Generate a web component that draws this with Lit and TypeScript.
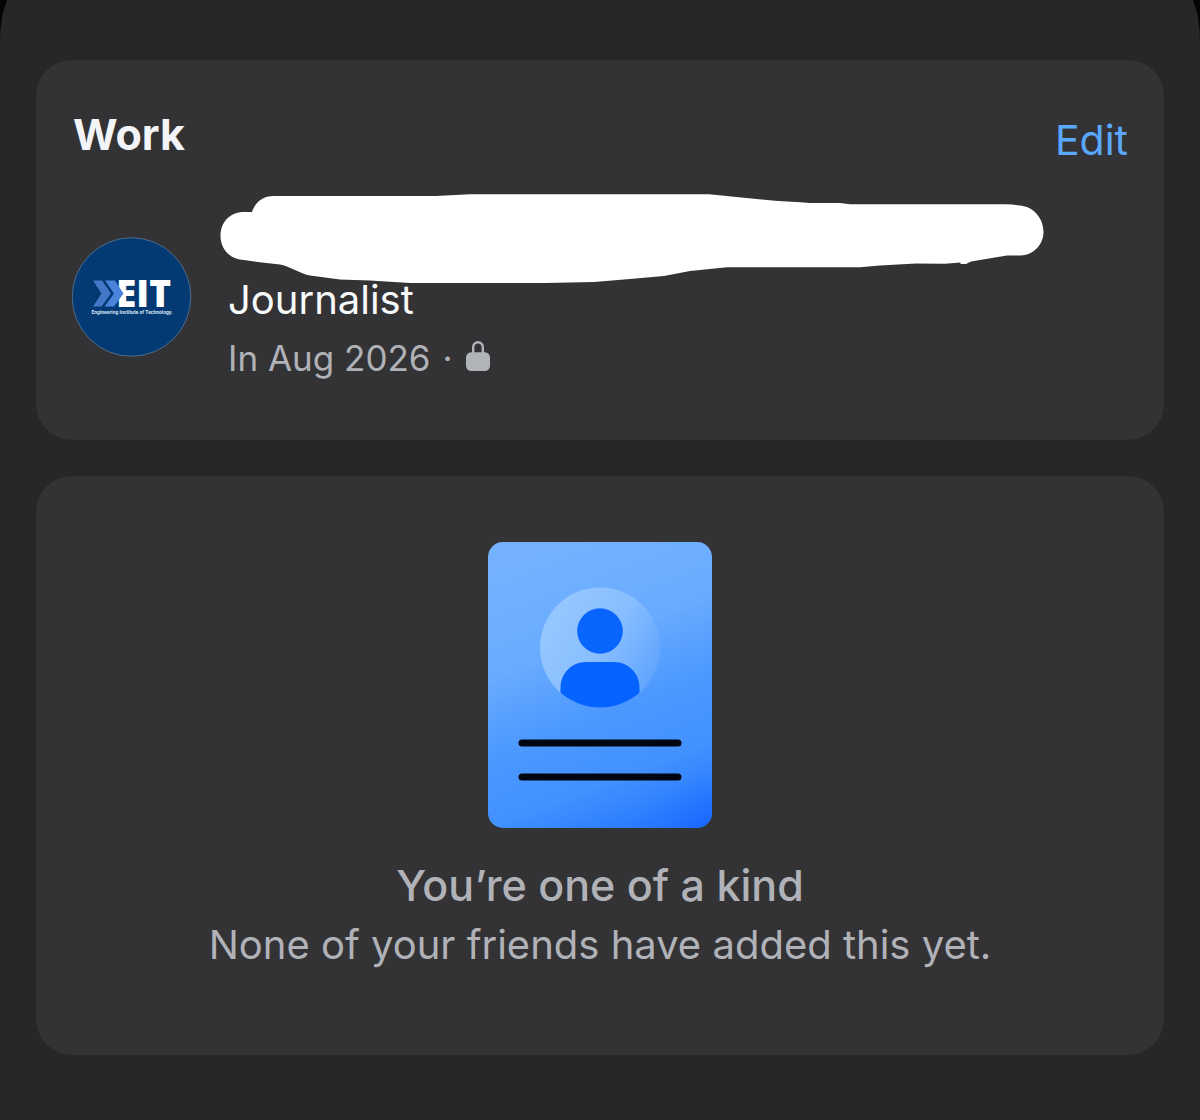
import { LitElement, html, css } from "lit";
import { customElement } from "lit/decorators.js";

@customElement("employer-logo")
class EmployerLogo extends LitElement {
  static styles = css`
    :host {
      display: block;
      flex: none;
    }
    .logo {
      display: block;
      width: 120px;
      height: 120px;
    }
    .name {
      font: 800 37px "Open Sans", sans-serif;
      fill: #ffffff;
    }
    .tagline {
      font: 700 5px "Roboto", sans-serif;
      fill: #d5e2f2;
    }
  `;

  render() {
    return html`
      <svg class="logo" viewBox="0 0 120 120" role="img" aria-label="EIT">
        <circle cx="59.500" cy="60" r="59.300" fill="#033a73" stroke="#5f7890" stroke-width="0.800" />
        <text class="name" x="44" y="69.500">EIT</text>
        <path d="M21 43.500H30L39 56.500L29.500 69.500H21L29.500 56.500Z" fill="#4378c8" />
        <path d="M33 43.500H43L51.500 56.500L42 69.500H32.500L42 56.500Z" fill="#4a83dc" />
        <text class="tagline" x="19.500" y="77">Engineering Institute of Technology.</text>
      </svg>
    `;
  }
}

@customElement("work-card")
class WorkCard extends LitElement {
  static styles = css`
    :host {
      display: block;
    }
    .card {
      display: flex;
      flex-direction: column;
      gap: 35px;
      padding: 48px 36px 53px;
      border-radius: 36px;
      background: #333335;
    }
    .header {
      display: flex;
      justify-content: space-between;
      align-items: flex-start;
      padding-left: 1px;
    }
    .title {
      margin: 0;
      font-size: 43px;
      font-weight: 700;
      line-height: 53px;
      color: #f2f4f7;
    }
    .edit {
      font-size: 41px;
      line-height: 64px;
      color: #5aa7ff;
      text-decoration: none;
    }
    .entry {
      display: flex;
      align-items: center;
      gap: 36px;
    }
    .details {
      flex: 1;
      min-width: 0;
    }
    .scribble {
      display: block;
      width: 824px;
      height: 90px;
      margin: -13px 0 -13px -8px;
    }
    .role,
    .date {
      margin: 0;
      line-height: 58px;
    }
    .role {
      font-size: 40px;
      color: #f8f9fb;
    }
    .date {
      display: flex;
      align-items: center;
      gap: 12px;
      font-size: 35px;
      color: #b0b2b8;
    }
    .lock {
      width: 26px;
      height: 36px;
    }
  `;

  render() {
    return html`
      <section class="card">
        <header class="header">
          <h2 class="title">Work</h2>
          <a class="edit" href="#edit">Edit</a>
        </header>
        <div class="entry">
          <employer-logo></employer-logo>
          <div class="details">
            <svg class="scribble" viewBox="220 194 824 90" aria-hidden="true">
              <path
                fill="#ffffff"
                d="M252 212C255 203 262 196 274 196L436 196L470 194.300H709L775 200.800Q790 201.500 810 203H840L850 204.200H1005Q1018 204.600 1027 207C1037 211 1043.500 221 1043.500 232C1043.500 244 1034 255 1021 255.500H1007L971 261.500L966 264H960.500V262.500L945 263.800L916 263.500L880 265.500L860 267.300H727L690 271L664 276L630 279L594 282L545 283H410L370 280.500L340 279.500L310 275.500C298 273 292 267 280 264.500L262 262.500L244 260C230 259.500 220.500 249 220.500 236C220.500 222 230 212 244 212Z"
              />
            </svg>
            <p class="role">Journalist</p>
            <p class="date">
              <span>In Aug 2026</span>
              <span>·</span>
              <svg class="lock" viewBox="0 0 26 36" role="img" aria-label="Only me">
                <rect x="1" y="12.300" width="24" height="18.700" rx="5.200" fill="#b0b3b8" />
                <path d="M8.200 14V7A4.800 4.800 0 0 1 17.800 7V14" fill="none" stroke="#b0b3b8" stroke-width="2.400" />
              </svg>
            </p>
          </div>
        </div>
      </section>
    `;
  }
}

@customElement("friends-card")
class FriendsCard extends LitElement {
  static styles = css`
    :host {
      display: block;
    }
    .card {
      display: flex;
      flex-direction: column;
      align-items: center;
      padding: 66px 36px 80px;
      border-radius: 36px;
      background: #333335;
      text-align: center;
      color: #b0b2b8;
    }
    .picture {
      width: 224px;
      height: 286px;
      margin-bottom: 27px;
    }
    .title,
    .note {
      margin: 0;
      line-height: 60px;
    }
    .title {
      font-size: 43px;
      font-weight: 500;
    }
    .note {
      font-size: 40px;
    }
  `;

  render() {
    return html`
      <section class="card">
        <svg class="picture" viewBox="0 0 224 286" aria-hidden="true">
          <defs>
            <linearGradient id="sheet" x1="0.350" y1="0" x2="0.650" y2="1">
              <stop offset="0" stop-color="#74b2ff" />
              <stop offset="0.350" stop-color="#68abff" />
              <stop offset="0.600" stop-color="#4c98ff" />
              <stop offset="0.820" stop-color="#4291ff" />
              <stop offset="1" stop-color="#2b7bff" />
            </linearGradient>
            <radialGradient id="corner" gradientUnits="userSpaceOnUse" cx="0" cy="0" r="1" gradientTransform="translate(220 296) rotate(-30) scale(150 64)">
              <stop offset="0" stop-color="#125fff" />
              <stop offset="0.400" stop-color="#1a68ff" stop-opacity="0.600" />
              <stop offset="1" stop-color="#2f80ff" stop-opacity="0" />
            </radialGradient>
            <linearGradient id="halo" x1="0.150" y1="0.250" x2="0.950" y2="0.700">
              <stop offset="0" stop-color="#94c6ff" />
              <stop offset="0.500" stop-color="#88beff" />
              <stop offset="1" stop-color="#62a6ff" />
            </linearGradient>
            <clipPath id="disc"><circle cx="112" cy="105.500" r="60" /></clipPath>
          </defs>
          <rect width="224" height="286" rx="15" fill="url(#sheet)" />
          <rect width="224" height="286" rx="15" fill="url(#corner)" />
          <circle cx="112" cy="105.500" r="60" fill="url(#halo)" />
          <circle cx="112" cy="89" r="22.800" fill="#0866ff" />
          <path
            clip-path="url(#disc)"
            d="M72.500 170V146C72.500 131 84 120 98 120H126C140 120 151.500 131 151.500 146V170Z"
            fill="#0563ff"
          />
          <path d="M34 201H190M34 235H190" stroke="#000612" stroke-width="7" stroke-linecap="round" />
        </svg>
        <h2 class="title">You’re one of a kind</h2>
        <p class="note">None of your friends have added this yet.</p>
      </section>
    `;
  }
}

@customElement("app-root")
class AppRoot extends LitElement {
  static styles = css`
    :host {
      display: block;
      overflow: hidden;
      background: #050506;
      font-family: "Inter", sans-serif;
    }
    .sheet {
      display: flex;
      flex-direction: column;
      gap: 36px;
      box-sizing: border-box;
      min-height: calc(100vh + 24px);
      margin-top: -24px;
      padding: 84px 36px 64px;
      border-radius: 32px 32px 0 0 / 64px 64px 0 0;
      background: #262729;
    }
  `;

  render() {
    return html`
      <main class="sheet">
        <work-card></work-card>
        <friends-card></friends-card>
      </main>
    `;
  }
}
